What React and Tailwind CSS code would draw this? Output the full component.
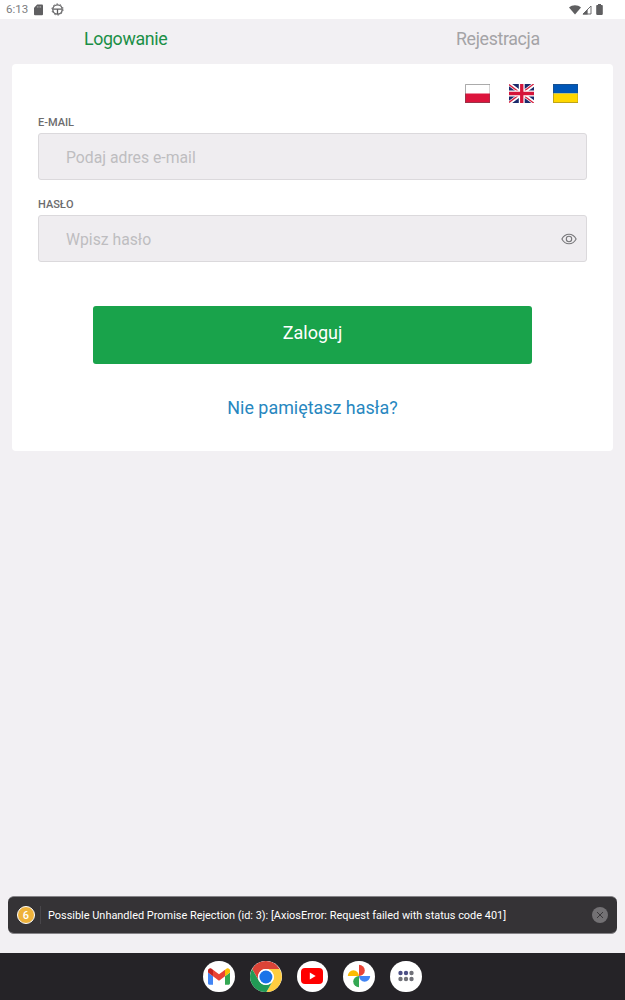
import React, { useState } from 'react';

const SdCardIcon = () => (
  <svg width="9" height="12" viewBox="0 0 9 12">
    <path fill="#5f5f61" d="M3.2 0.5H8a1 1 0 0 1 1 1v8.8a1 1 0 0 1-1 1H1a1 1 0 0 1-1-1V3.7z" />
    <path stroke="#b5b5b5" strokeWidth="0.7" d="M3.4 2v1.8M5 2v1.8M6.6 2v1.8" />
  </svg>
);

const DebugIcon = () => (
  <svg width="13" height="13" viewBox="0 0 13 13" fill="none" stroke="#5f5f61">
    <circle cx="6.5" cy="6.5" r="4.7" strokeWidth="1.3" />
    <circle cx="6.5" cy="6.5" r="5.6" strokeWidth="0.9" strokeDasharray="1.5 2.02" />
    <path strokeWidth="1.3" d="M2.2 6.2h8.6M6.5 6.2v4.8" />
  </svg>
);

const StatusBar = () => (
  <div className="h-[19px] shrink-0 bg-white flex items-center justify-between pl-[6px] pr-[22px]">
    <div className="flex items-center">
      <span className="pt-px text-[11.5px] leading-none text-[#7c7c7e] w-[28px]">6:13</span>
      <SdCardIcon />
      <div className="ml-2">
        <DebugIcon />
      </div>
    </div>
    <div className="flex items-center">
      <svg width="12" height="10" viewBox="0 0 12 10">
        <path fill="#5f5f61" d="M0 2.4C3.4-.5 8.6-.5 12 2.4L6 9.6z" />
      </svg>
      <svg className="ml-px" width="10" height="10" viewBox="0 0 10 10">
        <path fill="none" stroke="#5f5f61" strokeWidth="0.9" d="M9 1v8H1z" />
        <path fill="#5f5f61" d="M0.5 9.4L5.6 4.3v5.1z" />
      </svg>
      <svg className="ml-[4px]" width="7" height="11" viewBox="0 0 7 11">
        <path fill="#5f5f61" d="M2 0h3v1.1h1a.8.8 0 0 1 .8.8v8.2a.8.8 0 0 1-.8.8H1a.8.8 0 0 1-.8-.8V1.9a.8.8 0 0 1 .8-.8h1z" />
      </svg>
    </div>
  </div>
);

const PolishFlag = () => (
  <svg width="25.5" height="19" viewBox="0 0 26 19" preserveAspectRatio="none">
    <path fill="#fff" d="M0 0h26v9.5H0z" />
    <path fill="#dc143c" d="M0 9.5h26V19H0z" />
    <path fill="none" stroke="#555" strokeOpacity="0.5" d="M.5.5h25v18H.5z" />
  </svg>
);

const BritishFlag = () => (
  <svg width="25.5" height="19" viewBox="0 0 26 19" preserveAspectRatio="none">
    <path fill="#1b2a6b" d="M0 0h26v19H0z" />
    <path stroke="#fff" strokeWidth="3.8" d="M0 0l26 19M26 0L0 19" />
    <path stroke="#d5203f" strokeWidth="1.3" d="M0 .6l26 19M26-.6L0 18.4" />
    <path stroke="#fff" strokeWidth="6" d="M13 0v19M0 9.5h26" />
    <path stroke="#d5153a" strokeWidth="3.4" d="M13 0v19M0 9.5h26" />
  </svg>
);

const UkrainianFlag = () => (
  <svg width="25.5" height="19" viewBox="0 0 26 19" preserveAspectRatio="none">
    <path fill="#0057b8" d="M0 0h26v9.5H0z" />
    <path fill="#ffd700" d="M0 9.5h26V19H0z" />
    <path fill="none" stroke="#444" strokeOpacity="0.35" d="M.5.5h25v18H.5z" />
  </svg>
);

const EyeIcon = () => (
  <svg width="16" height="12" viewBox="0 0 16 12" fill="none" stroke="#77777a" strokeWidth="1.1">
    <path d="M.9 6C2.5 2.9 5 1.2 8 1.2S13.5 2.9 15.1 6C13.5 9.1 11 10.8 8 10.8S2.5 9.1.9 6z" />
    <circle cx="8" cy="6" r="2.7" />
  </svg>
);

const GmailIcon = () => (
  <svg width="22" height="17" viewBox="52 42 88 66">
    <path fill="#4285f4" d="M58 108h14V74L52 59v43c0 3.32 2.69 6 6 6" />
    <path fill="#34a853" d="M120 108h14c3.32 0 6-2.69 6-6V59l-20 15" />
    <path fill="#fbbc04" d="M120 48v26l20-15v-8c0-7.42-8.47-11.65-14.4-7.2" />
    <path fill="#ea4335" d="M72 74V48l24 18 24-18v26L96 92" />
    <path fill="#c5221f" d="M52 51v8l20 15V48l-5.6-4.2c-5.94-4.45-14.4-.22-14.4 7.2" />
  </svg>
);

const ChromeIcon = () => (
  <svg width="32" height="32" viewBox="0 0 48 48">
    <path fill="#db4437" d="M24 12h20.8A24 24 0 0 0 3.2 12l10.4 18A12 12 0 0 1 24 12z" />
    <path fill="#ffcd40" d="M44.8 12A24 24 0 0 1 24 48l10.4-18A12 12 0 0 0 24 12z" />
    <path fill="#229a55" d="M3.2 12A24 24 0 0 0 24 48l10.4-18a12 12 0 0 1-20.8 0z" />
    <circle cx="24" cy="24" r="12" fill="#fff" />
    <circle cx="24" cy="24" r="9.8" fill="#1a73e8" />
  </svg>
);

const YoutubeIcon = () => (
  <svg width="22" height="16" viewBox="0 0 22 16">
    <rect width="22" height="16" rx="4" fill="#f00" />
    <path fill="#fff" d="M8.8 4.6v6.8l5.9-3.4z" />
  </svg>
);

const PhotosIcon = () => (
  <svg width="24" height="24" viewBox="0 0 24 24">
    <path fill="#ea4335" d="M12 .8a5.8 5.6 0 0 1 0 11.2z" />
    <path fill="#4285f4" d="M23.2 12a5.6 5.8 0 0 1-11.2 0z" />
    <path fill="#34a853" d="M12 23.2a5.8 5.6 0 0 1 0-11.2z" />
    <path fill="#fbbc04" d="M.8 12a5.6 5.8 0 0 1 11.2 0z" />
  </svg>
);

const AppsIcon = () => (
  <svg width="16" height="12" viewBox="0 0 16 12">
    <circle cx="2.5" cy="3" r="2.2" fill="#4b4f85" />
    <circle cx="8" cy="3" r="2.2" fill="#4b4f85" />
    <circle cx="13.5" cy="3" r="2.2" fill="#707178" />
    <circle cx="2.5" cy="9" r="2.2" fill="#707178" />
    <circle cx="8" cy="9" r="2.2" fill="#707178" />
    <circle cx="13.5" cy="9" r="2.2" fill="#707178" />
  </svg>
);

const apps = [
  { name: 'Gmail', icon: <GmailIcon /> },
  { name: 'Chrome', icon: <ChromeIcon /> },
  { name: 'YouTube', icon: <YoutubeIcon /> },
  { name: 'Photos', icon: <PhotosIcon /> },
  { name: 'Apps', icon: <AppsIcon /> },
];

const App = () => {
  const [email, setEmail] = useState('');
  const [password, setPassword] = useState('');
  const [showPassword, setShowPassword] = useState(false);

  const handleSubmit = (e) => {
    e.preventDefault();
  };

  return (
    <div className="h-[1000px] w-[625px] overflow-hidden flex flex-col bg-[#f2f0f3] font-['Roboto',sans-serif]">
      <StatusBar />

      {/* Tabs */}
      <div className="h-[44.5px] shrink-0 flex items-start justify-between px-[84px] pt-[8px] text-[17.8px] tracking-[-0.36px] leading-6">
        <button className="w-[85px] text-left whitespace-nowrap text-[#1a8f46]">Logowanie</button>
        <button className="w-[85px] text-left whitespace-nowrap text-[#a4a3a6]">Rejestracja</button>
      </div>

      {/* Login card */}
      <form
        onSubmit={handleSubmit}
        className="mx-[12px] h-[387.5px] shrink-0 rounded-[4px] bg-white px-[26px] pt-[20.5px] flex flex-col"
      >
        <div className="flex justify-end gap-[18.5px] pr-[9px]">
          <PolishFlag />
          <BritishFlag />
          <UkrainianFlag />
        </div>

        <label htmlFor="email" className="mt-[12px] h-[18px] text-[11px] leading-4 font-medium text-[#6c6c6e]">
          E-MAIL
        </label>
        <input
          type="text"
          id="email"
          value={email}
          onChange={(e) => setEmail(e.target.value)}
          className="h-[47px] shrink-0 rounded-[3px] border border-[#dbd9dc] bg-[#efedf0] px-[27px] pt-[2px] text-[15.75px] placeholder:text-[#bebdc0] outline-none"
          placeholder="Podaj adres e-mail"
        />

        <label htmlFor="password" className="mt-[17px] h-[18px] text-[11px] leading-4 font-medium text-[#6c6c6e]">
          HASŁO
        </label>
        <div className="h-[47px] shrink-0 flex items-center rounded-[3px] border border-[#dbd9dc] bg-[#efedf0] pl-[27px] pr-[9px]">
          <input
            type={showPassword ? 'text' : 'password'}
            id="password"
            value={password}
            onChange={(e) => setPassword(e.target.value)}
            className="flex-1 bg-transparent pt-[2px] text-[15.75px] placeholder:text-[#bebdc0] outline-none"
            placeholder="Wpisz hasło"
          />
          <button type="button" onClick={() => setShowPassword(!showPassword)}>
            <EyeIcon />
          </button>
        </div>

        <button
          type="submit"
          className="mt-[44px] mx-[55px] h-[58px] shrink-0 rounded-[3px] bg-[#19a34b] pb-[5px] text-[18px] text-white"
        >
          Zaloguj
        </button>

        <a href="#" className="mt-[32px] self-center text-[17.9px] leading-6 text-[#2787c0]">
          Nie pamiętasz hasła?
        </a>
      </form>

      {/* Warning toast */}
      <div className="mt-auto mx-[8px] mb-[19px] h-[38px] shrink-0 flex items-center rounded-[6px] border-y border-[#858387] bg-[#353336] pl-[9px] pr-[9px]">
        <div className="size-[18px] rounded-full border-[1.5px] border-white bg-[#eeb23b] flex items-center justify-center text-[11px] leading-none font-medium text-white">
          6
        </div>
        <div className="ml-[5px] mr-[7px] h-[18px] w-px bg-[#48464a]" />
        <span className="flex-1 whitespace-nowrap pt-[2px] text-[10.93px] leading-4 text-white">
          Possible Unhandled Promise Rejection (id: 3): [AxiosError: Request failed with status code 401]
        </span>
        <button className="size-[16px] rounded-full bg-[#737174] flex items-center justify-center">
          <svg width="8" height="8" viewBox="0 0 8 8" stroke="#3a383b" strokeWidth="1">
            <path d="M1 1l6 6M7 1L1 7" />
          </svg>
        </button>
      </div>

      {/* Android taskbar */}
      <div className="h-[47px] shrink-0 flex items-center justify-center gap-[15.1px] bg-[#252327]">
        {apps.map((app) => (
          <button
            key={app.name}
            aria-label={app.name}
            className="size-[31.8px] rounded-full bg-white overflow-hidden flex items-center justify-center"
          >
            {app.icon}
          </button>
        ))}
      </div>
    </div>
  );
};

export default App;
